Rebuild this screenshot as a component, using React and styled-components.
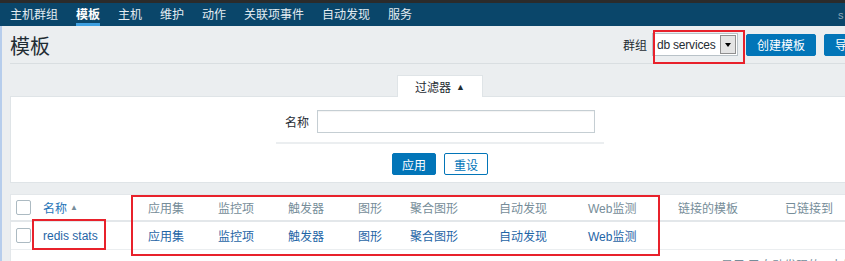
import React from "react";
import styled, { createGlobalStyle } from "styled-components";

const GlobalStyle = createGlobalStyle`
  html, body {
    margin: 0;
    padding: 0;
    overflow: hidden;
    background: #ebeef0;
  }
  body {
    font-family: "Liberation Sans", Arial, "Noto Sans CJK SC", sans-serif;
    font-size: 12px;
    color: #1f2c33;
  }
`;

const navItems = ["主机群组", "模板", "主机", "维护", "动作", "关联项事件", "自动发现", "服务"];

const columns = [
  { title: "应用集" },
  { title: "监控项" },
  { title: "触发器" },
  { title: "图形" },
  { title: "聚合图形" },
  { title: "自动发现" },
  { title: "Web监测" },
];

function App() {
  return (
    <Page>
      <GlobalStyle />
      <TopStrip />
      <NavBar>
        {navItems.map((item) => (
          <NavItem key={item} active={item === "模板"}>
            {item}
          </NavItem>
        ))}
        <NavRight>s</NavRight>
      </NavBar>

      <Main>
        <Header>
          <Title>模板</Title>
          <Controls>
            <Label>群组</Label>
            <Select>
              <span>db services</span>
              <DropButton>
                <Arrow />
              </DropButton>
            </Select>
            <Button>创建模板</Button>
            <Button>导入</Button>
          </Controls>
        </Header>

        <TabRow>
          <Tab>
            过滤器 <small>▲</small>
          </Tab>
        </TabRow>
        <FilterPanel>
          <FormRow>
            <Label>名称</Label>
            <Input />
          </FormRow>
          <ButtonRow>
            <Button>应用</Button>
            <Button outline>重设</Button>
          </ButtonRow>
        </FilterPanel>

        <Table>
          <HeadRow>
            <Cell>
              <Checkbox />
            </Cell>
            <Cell>
              <SortLink>名称</SortLink>
              <SortArrow>▲</SortArrow>
            </Cell>
            {columns.map((c) => (
              <Cell key={c.title}>{c.title}</Cell>
            ))}
            <Cell>链接的模板</Cell>
            <Cell>已链接到</Cell>
          </HeadRow>
          <BodyRow>
            <Cell>
              <Checkbox />
            </Cell>
            <Cell>
              <Link>redis stats</Link>
            </Cell>
            {columns.map((c) => (
              <Cell key={c.title}>
                <Link>{c.title}</Link>
              </Cell>
            ))}
            <Cell />
            <Cell />
          </BodyRow>
          <Footer>显示 已自动发现的 1中的1</Footer>
        </Table>
      </Main>

      <Highlight style={{ left: 653, top: 30, width: 92, height: 34 }} />
      <Highlight style={{ left: 131, top: 195, width: 529, height: 61 }} />
      <Highlight style={{ left: 32, top: 219, width: 74, height: 31 }} />
    </Page>
  );
}

export default App;

const Page = styled.div`
  position: relative;
  width: 880px;
  height: 261px;
  overflow: hidden;
`;

const TopStrip = styled.div`
  height: 3px;
  background: #2b2b2b;
`;

const NavBar = styled.nav`
  height: 23px;
  background: #0a466a;
  display: flex;
  align-items: stretch;
  gap: 18px;
  padding-left: 10px;
`;

const NavItem = styled.div`
  display: flex;
  align-items: center;
  color: ${(p) => (p.active ? "#ffffff" : "#e3ecf2")};
  font-weight: ${(p) => (p.active ? "bold" : "normal")};
  border-bottom: 3px solid ${(p) => (p.active ? "#3d9fe0" : "transparent")};
  padding-top: 1px;
  box-sizing: border-box;
`;

const NavRight = styled.div`
  margin-left: auto;
  width: 42px;
  display: flex;
  align-items: center;
  color: #8fa7b8;
  font-size: 11px;
`;

const Main = styled.div`
  border-left: 2px solid #b6cdec;
  padding: 0 10px 0 8px;
  height: 235px;
`;

const Header = styled.div`
  height: 37px;
  display: flex;
  align-items: center;
  justify-content: space-between;
  border-bottom: 1px solid #d9dee1;
`;

const Title = styled.h1`
  margin: 0;
  font-size: 20px;
  font-weight: normal;
  color: #1f2c33;
  padding-top: 1px;
`;

const Controls = styled.div`
  display: flex;
  align-items: center;
`;

const Label = styled.span`
  color: #1f2c33;
  margin-right: 5px;
`;

const Select = styled.div`
  width: 86px;
  height: 23px;
  box-sizing: border-box;
  border: 1px solid #b9c2c8;
  background: #fff;
  display: flex;
  align-items: center;
  justify-content: space-between;
  padding: 0 1px 0 4px;
  font-size: 12px;
  letter-spacing: -0.2px;
  color: #1f2c33;
  margin-right: 8px;
`;

const DropButton = styled.span`
  width: 16px;
  height: 19px;
  box-sizing: border-box;
  background: #e4e4e4;
  border: 1px solid #8f8f8f;
  display: flex;
  align-items: center;
  justify-content: center;
`;

const Arrow = styled.span`
  width: 0;
  height: 0;
  border-left: 3px solid transparent;
  border-right: 3px solid transparent;
  border-top: 4px solid #000;
`;

const Button = styled.button`
  height: 22px;
  padding: 0 10px;
  margin-left: ${(p) => (p.outline ? "10px" : "0")};
  font-family: inherit;
  font-size: 12px;
  border-radius: 2px;
  border: 1px solid #0275b8;
  background: ${(p) => (p.outline ? "#fff" : "#0275b8")};
  color: ${(p) => (p.outline ? "#0275b8" : "#fff")};
  & + & {
    margin-left: 8px;
  }
`;

const TabRow = styled.div`
  display: flex;
  justify-content: center;
  margin-top: 11px;
`;

const Tab = styled.div`
  width: 86px;
  height: 22px;
  box-sizing: border-box;
  background: #fff;
  border: 1px solid #dfe4e7;
  border-bottom: none;
  margin-bottom: -1px;
  position: relative;
  display: flex;
  align-items: center;
  justify-content: center;
  color: #1f2c33;
  small {
    font-size: 9px;
    margin-left: 5px;
  }
`;

const FilterPanel = styled.div`
  height: 87px;
  box-sizing: border-box;
  background: #fff;
  border: 1px solid #dfe4e7;
  display: flex;
  flex-direction: column;
  align-items: center;
  padding-top: 13px;
`;

const FormRow = styled.div`
  width: 328px;
  display: flex;
  align-items: center;
  justify-content: center;
  padding-bottom: 9px;
  border-bottom: 2px solid #ebeef0;
`;

const Input = styled.div`
  width: 278px;
  height: 23px;
  box-sizing: border-box;
  border: 1px solid #c5ced3;
  background: #fff;
  margin-left: 3px;
  box-shadow: inset 0 1px 1px rgba(0, 0, 0, 0.05);
`;

const ButtonRow = styled.div`
  display: flex;
  margin-top: 9px;
  & > button {
    width: 44px;
    padding: 0;
  }
`;

const Table = styled.div`
  margin-top: 11px;
  background: #fff;
  border: 1px solid #e3e7ea;
  border-bottom: none;
  display: grid;
  grid-template-columns: 27px 105px 70px 70px 70px 52px 89px 89px 90px 107px 1fr;
`;

const HeadRow = styled.div`
  display: contents;
  & > div {
    height: 27px;
    color: #768d99;
    border-bottom: 2px solid #e3e7ea;
  }
`;

const BodyRow = styled.div`
  display: contents;
  & > div {
    height: 28px;
    border-bottom: 1px solid #ebeef0;
  }
`;

const Cell = styled.div`
  box-sizing: border-box;
  display: flex;
  align-items: center;
  padding-left: 5px;
  white-space: nowrap;
`;

const Checkbox = styled.span`
  width: 15px;
  height: 15px;
  box-sizing: border-box;
  border: 1px solid #acbac2;
  border-radius: 2px;
  background: #fff;
`;

const Link = styled.span`
  color: #1f65a6;
`;

const SortLink = styled(Link)`
  color: #2574b8;
`;

const SortArrow = styled.span`
  color: #768d99;
  font-size: 8px;
  margin-left: 3px;
`;

const Footer = styled.div`
  grid-column: 1 / -1;
  text-align: right;
  padding: 6px 8px 0 0;
  color: #768d99;
`;

const Highlight = styled.div`
  position: absolute;
  box-sizing: border-box;
  border: 2px solid #e8212b;
  pointer-events: none;
`;
